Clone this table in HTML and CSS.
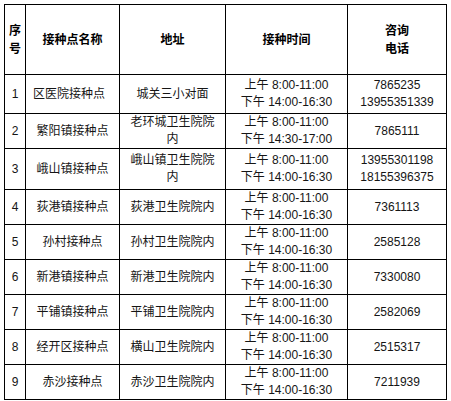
FILE: index.html
```html
<!DOCTYPE html>
<html lang="zh-CN">
<head>
<meta charset="utf-8">
<title>接种点</title>
<link rel="stylesheet" href="styles.css">
</head>
<body>
<table class="sites">
  <thead>
    <tr class="rh">
      <th class="c1">序号</th>
      <th class="c2">接种点名称</th>
      <th class="c3">地址</th>
      <th class="c4">接种时间</th>
      <th class="c5">咨询<br>电话</th>
    </tr>
  </thead>
  <tbody>
    <tr class="r1">
      <td>1</td>
      <td class="left">区医院接种点</td>
      <td>城关三小对面</td>
      <td>上午 8:00-11:00<br>下午 14:00-16:30</td>
      <td>7865235<br>13955351339</td>
    </tr>
    <tr class="r2">
      <td>2</td>
      <td>繁阳镇接种点</td>
      <td>老环城卫生院院内</td>
      <td>上午 8:00-11:00<br>下午 14:30-17:00</td>
      <td>7865111</td>
    </tr>
    <tr class="r3">
      <td>3</td>
      <td>峨山镇接种点</td>
      <td>峨山镇卫生院院内</td>
      <td>上午 8:00-11:00<br>下午 14:00-16:30</td>
      <td>13955301198<br>18155396375</td>
    </tr>
    <tr class="r4">
      <td>4</td>
      <td>荻港镇接种点</td>
      <td>荻港卫生院院内</td>
      <td>上午 8:00-11:00<br>下午 14:00-16:30</td>
      <td>7361113</td>
    </tr>
    <tr class="r5">
      <td>5</td>
      <td>孙村接种点</td>
      <td>孙村卫生院院内</td>
      <td>上午 8:00-11:00<br>下午 14:00-16:30</td>
      <td>2585128</td>
    </tr>
    <tr class="r6">
      <td>6</td>
      <td>新港镇接种点</td>
      <td>新港卫生院院内</td>
      <td>上午 8:00-11:00<br>下午 14:00-16:30</td>
      <td>7330080</td>
    </tr>
    <tr class="r7">
      <td>7</td>
      <td>平铺镇接种点</td>
      <td>平铺卫生院院内</td>
      <td>上午 8:00-11:00<br>下午 14:00-16:30</td>
      <td>2582069</td>
    </tr>
    <tr class="r8">
      <td>8</td>
      <td>经开区接种点</td>
      <td>横山卫生院院内</td>
      <td>上午 8:00-11:00<br>下午 14:00-16:30</td>
      <td>2515317</td>
    </tr>
    <tr class="r9">
      <td>9</td>
      <td>赤沙接种点</td>
      <td>赤沙卫生院院内</td>
      <td>上午 8:00-11:00<br>下午 14:00-16:30</td>
      <td>7211939</td>
    </tr>
  </tbody>
</table>
</body>
</html>
```
FILE: styles.css
```css
html, body {
  margin: 0;
  padding: 0;
  background: #fff;
}
body {
  padding: 4px 0 0 4px;
  font-family: "Liberation Sans", "Noto Sans CJK SC", sans-serif;
  font-size: 12px;
  line-height: 17px;
  color: #151515;
}
.sites {
  border-collapse: separate;
  border-spacing: 0;
  table-layout: fixed;
  width: 443px;
  border-left: 1px solid #000;
  border-top: 1px solid #000;
}
.sites th,
.sites td {
  box-sizing: border-box;
  border-right: 1px solid #000;
  border-bottom: 1px solid #000;
  padding: 0 5px;
  text-align: center;
  vertical-align: middle;
  white-space: normal;
}
.sites th {
  font-weight: bold;
  color: #000;
  line-height: 18px;
}
.sites .c1 { width: 21px; padding: 0 2px; }
.sites .c2 { width: 94px; }
.sites .c3 { width: 106px; }
.sites .c4 { width: 122px; }
.sites .c5 { width: 99px; }
.sites td:first-child { padding: 0 2px; }
.sites td.left { text-align: left; padding-left: 7px; }

.rh th { height: 70px; }
.r1 td { height: 39px; }
.r2 td { height: 34px; }
.r3 td { height: 41px; }
.r4 td { height: 35px; }
.r5 td { height: 34px; }
.r6 td { height: 35px; }
.r7 td { height: 35px; }
.r8 td { height: 34px; }
.r9 td { height: 33px; }
```
